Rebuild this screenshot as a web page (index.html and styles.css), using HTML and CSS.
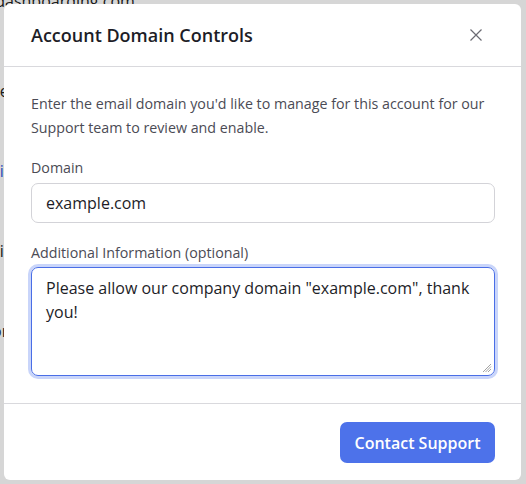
FILE: index.html
```html
<!DOCTYPE html>
<html>
<head>
<meta charset="utf-8">
<link rel="stylesheet" href="styles.css">
</head>
<body>
<div class="page">
  <p class="bg-line top">support@dashboarding.com.</p>
  <p class="bg-line">ce</p>
  <p class="bg-line link">ci</p>
  <p class="bg-line">si</p>
  <p class="bg-line">or</p>
</div>
<div class="overlay"></div>
<div class="modal">
  <div class="modal-header">
    <h2 class="title">Account Domain Controls</h2>
    <button class="close" aria-label="Close">
      <svg width="12" height="12" viewBox="0 0 12 12"><path d="M0.5 0.5L11.5 11.5M11.5 0.5L0.5 11.5" stroke="#6b6b73" stroke-width="1.2" fill="none"/></svg>
    </button>
  </div>
  <div class="modal-body">
    <p class="desc">Enter the email domain you'd like to manage for this account for our Support team to review and enable.</p>
    <label class="label">Domain</label>
    <div class="input">example.com</div>
    <label class="label second">Additional Information (optional)</label>
    <div class="textarea">Please allow our company domain "example.com", thank you!
      <svg class="grip" width="10" height="10" viewBox="0 0 10 10"><path d="M9 1L1 9M9 3.5L3.5 9M9 6L6 9" stroke="#8a8a8a" stroke-width="0.8"/></svg>
    </div>
  </div>
  <div class="modal-footer">
    <button class="primary">Contact Support</button>
  </div>
</div>
</body>
</html>
```
FILE: styles.css
```css
* { box-sizing: border-box; }
html, body { margin: 0; height: 100%; }
body {
  background: #ffffff;
  font-family: "Open Sans", "Noto Sans", sans-serif;
  overflow: hidden;
  position: relative;
}
.page {
  margin-left: -8px;
  height: 484px;
  overflow: hidden;
}
.bg-line {
  margin: 0 0 60px;
  font-size: 16px;
  line-height: 20px;
  color: #222;
}
.bg-line.top { margin: -9px 0 70px -70px; }
.bg-line.link { color: #3355dd; }
.overlay {
  position: absolute;
  inset: 0;
  background: rgba(0, 0, 0, 0.16);
}
.modal {
  position: absolute;
  left: 4px;
  top: 4px;
  width: 517px;
  height: 476px;
  background: #fff;
  border-radius: 6px;
  display: flex;
  flex-direction: column;
  color: #1d1d27;
}
.modal-header {
  height: 63px;
  border-bottom: 1px solid #d9d9dd;
  display: flex;
  align-items: center;
  justify-content: space-between;
  padding: 0 39px 0 27px;
}
.title {
  margin: 0;
  font-size: 18px;
  font-weight: 600;
  color: #1d1d27;
}
.close {
  border: 0;
  background: none;
  padding: 0;
  width: 12px;
  height: 12px;
  display: flex;
}
.modal-body {
  flex: 1;
  padding: 25px 26px 0 27px;
  display: flex;
  flex-direction: column;
}
.desc {
  margin: 0;
  font-size: 14.25px;
  line-height: 24px;
  color: #4b4b55;
}
.label {
  display: block;
  margin-top: 18px;
  font-size: 14.25px;
  line-height: 20px;
  color: #4b4b55;
}
.label.second { margin-top: 20px; }
.input {
  margin-top: 5px;
  height: 40px;
  border: 1px solid #d3d3d8;
  border-radius: 7px;
  padding: 0 14px;
  display: flex;
  align-items: center;
  font-size: 16px;
  color: #1d1d27;
}
.textarea {
  position: relative;
  margin-top: 4px;
  height: 109px;
  border: 1px solid #4a6ee6;
  border-radius: 7px;
  box-shadow: 0 0 0 3px #c9d5fa;
  padding: 8px 14px;
  font-size: 16px;
  line-height: 24px;
  color: #1d1d27;
}
.grip {
  position: absolute;
  right: 2px;
  bottom: 2px;
}
.modal-footer {
  height: 77px;
  border-top: 1px solid #d9d9dd;
  display: flex;
  justify-content: flex-end;
  align-items: flex-start;
  padding: 18px 26px 0 0;
}
.primary {
  width: 155px;
  height: 41px;
  border: 0;
  border-radius: 7px;
  background: #4d72ea;
  color: #fff;
  font-family: inherit;
  font-size: 16px;
  font-weight: 600;
}
```
